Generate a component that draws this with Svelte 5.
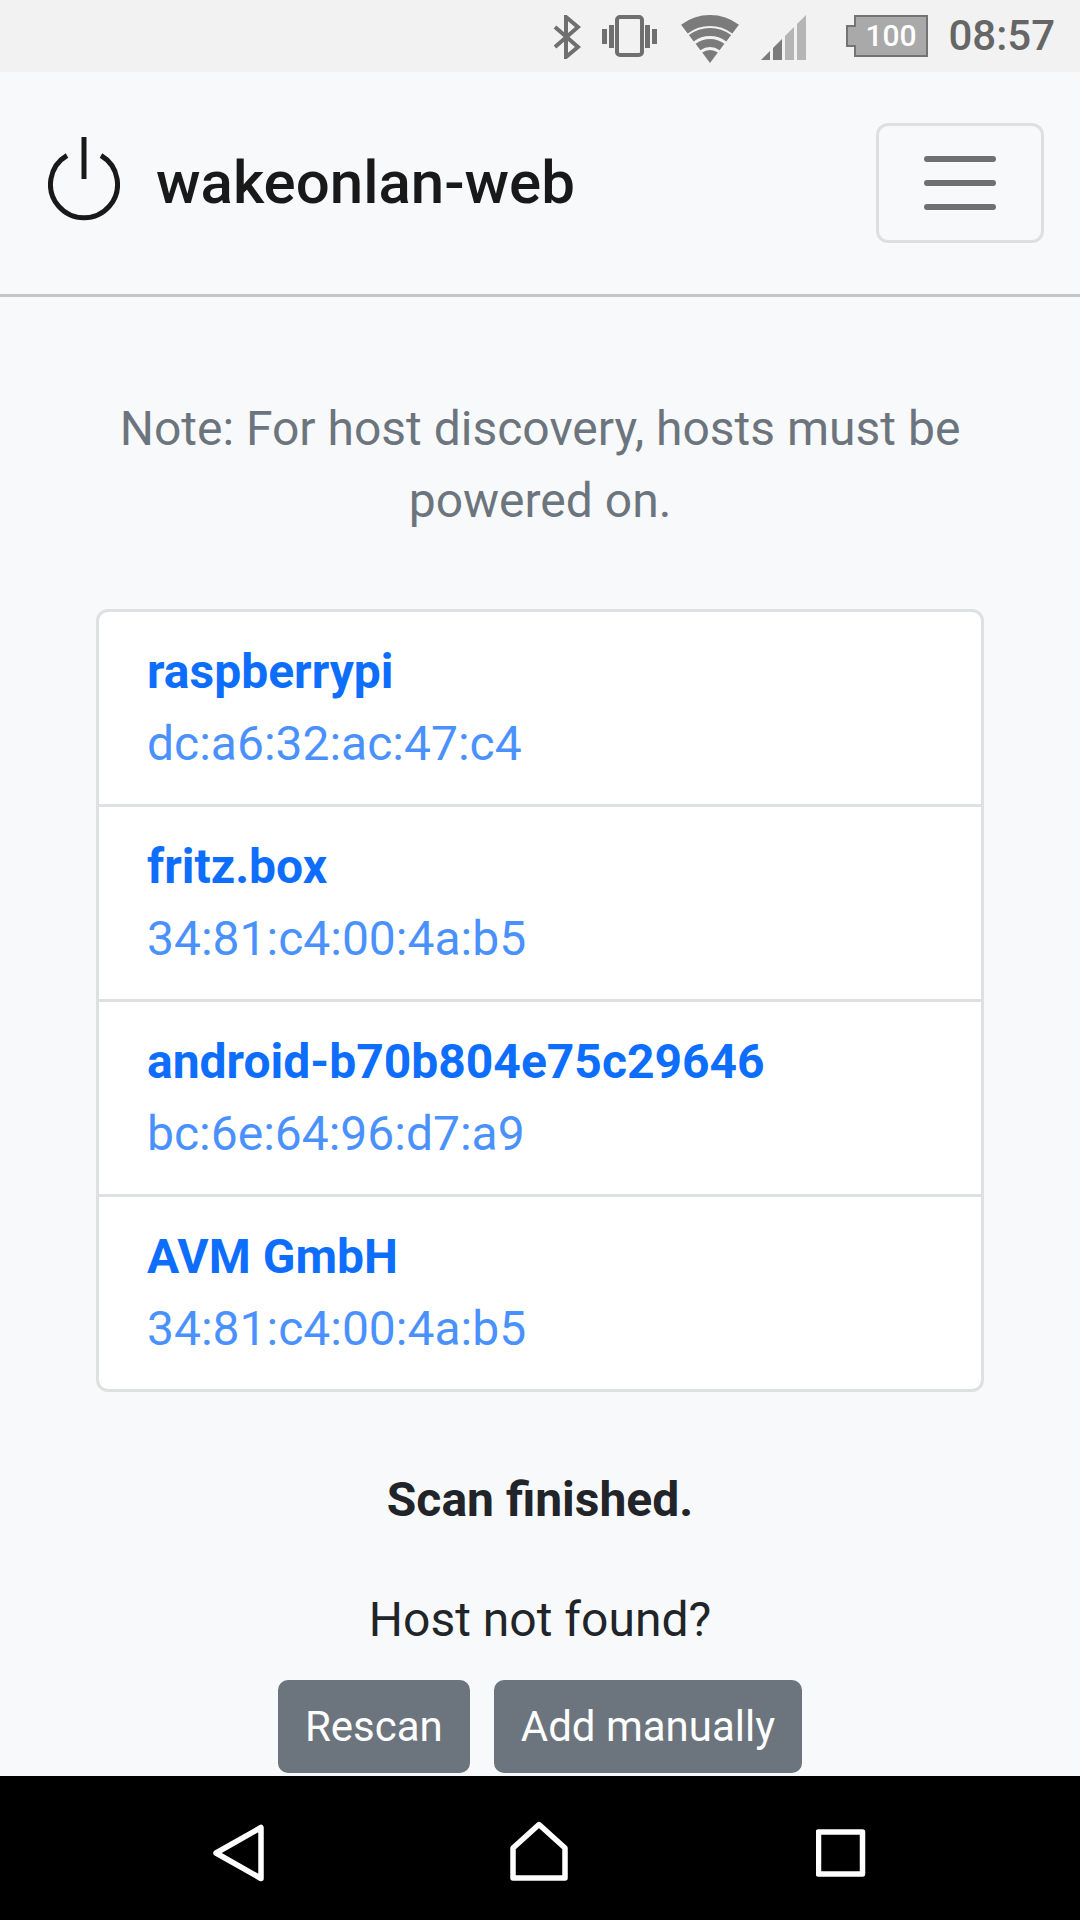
<script>
  const hosts = [
    { name: "raspberrypi", mac: "dc:a6:32:ac:47:c4" },
    { name: "fritz.box", mac: "34:81:c4:00:4a:b5" },
    { name: "android-b70b804e75c29646", mac: "bc:6e:64:96:d7:a9" },
    { name: "AVM GmbH", mac: "34:81:c4:00:4a:b5" }
  ];
</script>

<div class="screen">
  <div class="status-bar">
    <svg class="bluetooth" width="28" height="44" viewBox="0 0 28 44" fill="none" stroke="#6f6f6f" stroke-width="4">
      <polyline points="2,12 25,32 13,42 13,2 25,12 2,32" />
    </svg>
    <svg class="vibrate" width="55" height="42" viewBox="0 0 55 42" fill="#6f6f6f">
      <rect x="0" y="14" width="5" height="15" />
      <rect x="7" y="10" width="5" height="23" />
      <rect x="43" y="10" width="5" height="23" />
      <rect x="50" y="14" width="5" height="15" />
      <rect x="15" y="2" width="25" height="38" rx="3" fill="none" stroke="#6f6f6f" stroke-width="4" />
    </svg>
    <svg class="wifi" width="58" height="48" viewBox="0 0 58 48" fill="none" stroke="#7b7b7b">
      <path d="M3.4 14.1A42.5 42.5 0 0 1 54.6 14.1" stroke-width="11" />
      <path d="M10.3 23.3A31 31 0 0 1 47.7 23.3" stroke-width="8" />
      <path d="M17 32A20 20 0 0 1 41 32" stroke-width="8" />
      <path d="M21.2 37.6A13 13 0 0 1 36.8 37.6L29 48Z" fill="#7b7b7b" stroke="none" />
    </svg>
    <svg class="signal" width="45" height="45" viewBox="0 0 45 45">
      <polygon points="0,45 9,36 9,45" fill="#7b7b7b" />
      <polygon points="12,33 21,24 21,45 12,45" fill="#7b7b7b" />
      <polygon points="24,21 33,12 33,45 24,45" fill="#b5b5b5" />
      <polygon points="36,9 45,0 45,45 36,45" fill="#b5b5b5" />
    </svg>
    <svg class="battery" width="82" height="42" viewBox="0 0 82 42">
      <path d="M9 1H81V41H9V31H1V11H9Z" fill="#a9a9a9" stroke="#747474" stroke-width="2" />
      <text x="45" y="31" text-anchor="middle">100</text>
    </svg>
    <span class="clock">08:57</span>
  </div>

  <div class="content">
    <nav class="navbar">
      <a class="brand" href="/">
        <svg width="72" height="92" viewBox="0 0 72 92" fill="none" stroke="#191919" stroke-width="5">
          <path d="M19 18.5A33.5 33.5 0 1 0 53 18.5" />
          <line x1="36" y1="0" x2="36" y2="42" />
        </svg>
        <span>wakeonlan-web</span>
      </a>
      <button class="toggler" aria-label="Toggle navigation">
        <span></span>
        <span></span>
        <span></span>
      </button>
    </nav>

    <main>
      <p class="note">Note: For host discovery, hosts must be powered on.</p>

      <div class="host-list">
        {#each hosts as host}
          <a class="host" href="/">
            <strong>{host.name}</strong>
            <span>{host.mac}</span>
          </a>
        {/each}
      </div>

      <p class="finished">Scan finished.</p>
      <p class="not-found">Host not found?</p>
      <div class="actions">
        <button class="btn">Rescan</button>
        <button class="btn">Add manually</button>
      </div>
    </main>
  </div>

  <div class="nav-bar">
    <svg class="back" width="52" height="58" viewBox="0 0 52 58" fill="none" stroke="#fff" stroke-width="5.5" stroke-linejoin="round">
      <polygon points="3,29 48,3.5 48,54.5" />
    </svg>
    <svg class="home" width="58" height="60" viewBox="0 0 58 60" fill="none" stroke="#fff" stroke-width="5.5" stroke-linejoin="round">
      <polygon points="29,3.5 55,27 55,57 3,57 3,27" />
    </svg>
    <svg class="recent" width="50" height="48" viewBox="0 0 50 48" fill="none" stroke="#fff" stroke-width="5.5" stroke-linejoin="round">
      <rect x="2.5" y="3" width="44" height="42" />
    </svg>
  </div>
</div>

<style>
  :global(body) {
    margin: 0;
  }

  .screen {
    width: 1080px;
    height: 1920px;
    display: flex;
    flex-direction: column;
    overflow: hidden;
    background-color: #f8f9fa;
    font-family: Roboto, "Liberation Sans", sans-serif;
    font-size: 48px;
    line-height: 72px;
    color: #212529;
  }

  /* android chrome */
  .status-bar {
    height: 72px;
    flex: none;
    display: flex;
    align-items: flex-start;
    padding: 15px 25px 0 0;
    box-sizing: border-box;
    justify-content: flex-end;
    background-color: #f2f2f2;
  }

  .bluetooth { margin-right: 21px; }
  .vibrate { margin-right: 24px; }
  .wifi { margin-right: 22px; }
  .signal { margin-right: 40px; }
  .battery { margin-right: 20px; }

  .battery text {
    font-size: 30px;
    font-weight: 500;
    fill: #fff;
  }

  .clock {
    font-size: 42px;
    line-height: 42px;
    font-weight: 500;
    color: #666;
  }

  .content {
    flex: 1;
    min-height: 0;
    overflow: hidden;
  }

  .navbar {
    height: 225px;
    box-sizing: border-box;
    display: flex;
    align-items: center;
    justify-content: space-between;
    padding: 0 36px 0 48px;
    border-bottom: 3px solid #c4c5c7;
  }

  .brand {
    display: flex;
    align-items: center;
    gap: 36px;
    font-size: 60px;
    font-weight: 500;
    color: rgba(0, 0, 0, 0.9);
    text-decoration: none;
  }

  .toggler {
    width: 168px;
    height: 120px;
    padding: 0;
    display: flex;
    flex-direction: column;
    align-items: center;
    justify-content: center;
    gap: 18px;
    background: transparent;
    border: 3px solid rgba(0, 0, 0, 0.1);
    border-radius: 12px;
  }

  .toggler span {
    width: 72px;
    height: 6px;
    border-radius: 3px;
    background-color: #707070;
  }

  main {
    padding: 96px 96px 0;
    text-align: center;
  }

  p {
    margin: 0;
  }

  .note {
    color: #6c757d;
    margin-bottom: 72px;
  }

  .host-list {
    display: flex;
    flex-direction: column;
    background-color: #fff;
    border: 3px solid #dfe0e1;
    border-radius: 12px;
    margin-bottom: 72px;
    text-align: left;
  }

  .host {
    display: flex;
    flex-direction: column;
    padding: 24px 48px;
    text-decoration: none;
    color: #0d6efd;
  }

  .host + .host {
    border-top: 3px solid #dfe0e1;
  }

  .host span {
    opacity: 0.75;
  }

  .finished {
    font-weight: 700;
    margin-bottom: 48px;
  }

  .not-found {
    margin-bottom: 24px;
  }

  .actions {
    display: flex;
    justify-content: center;
    gap: 24px;
  }

  .btn {
    padding: 12px 24px;
    font-family: inherit;
    font-size: 42px;
    line-height: 63px;
    color: #fff;
    background-color: #6c757d;
    border: 3px solid #6c757d;
    border-radius: 10px;
  }

  .nav-bar {
    height: 144px;
    flex: none;
    position: relative;
    background-color: #000;
  }

  /* nav buttons sit at fixed spots on the bar */
  .nav-bar svg {
    position: absolute;
  }

  .back { left: 213px; top: 48px; }
  .home { left: 510px; top: 45px; }
  .recent { left: 816px; top: 53px; }
</style>
